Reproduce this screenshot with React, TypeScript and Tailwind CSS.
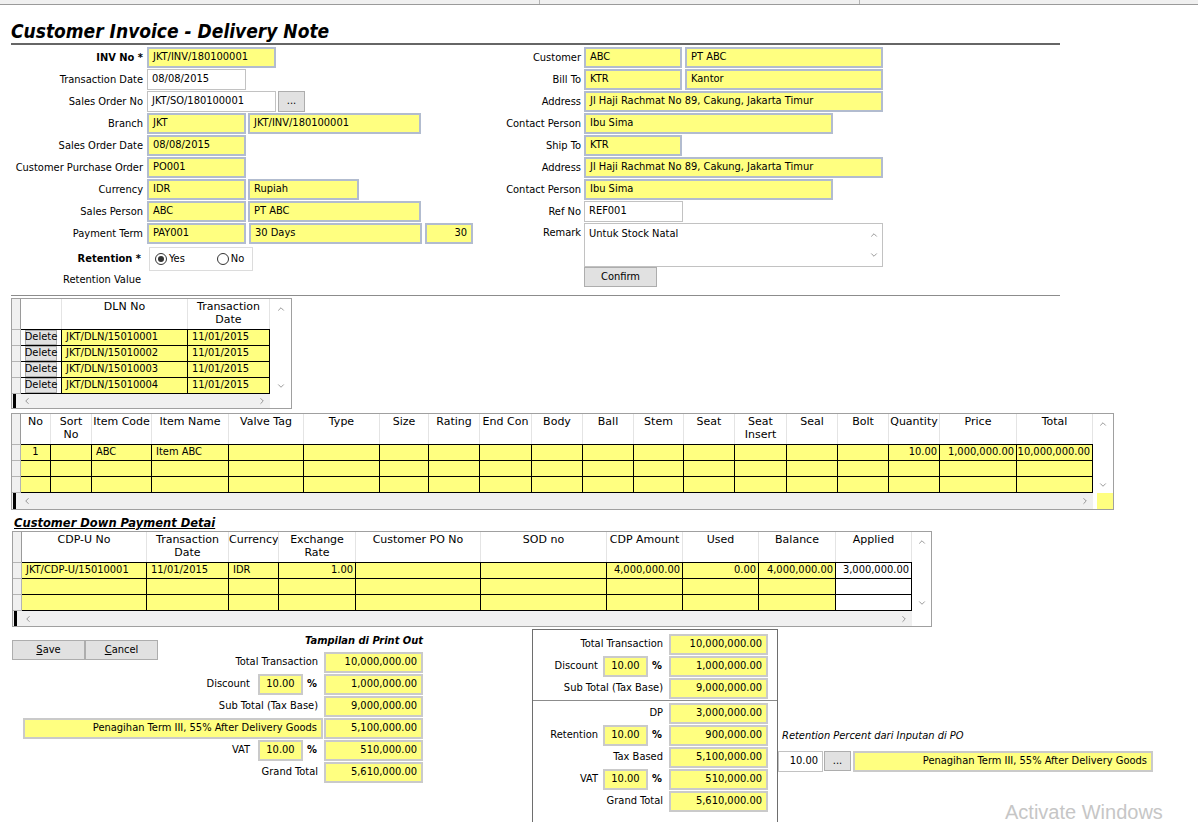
import { ChevronDown, ChevronLeft, ChevronRight, ChevronUp } from "lucide-react";
import type { ReactNode } from "react";

// Tahoma-ish body text and Verdana-ish grid headers
const TH = "font-['DejaVu_Sans_Condensed','Liberation_Sans',sans-serif]";
const VD = "font-['DejaVu_Sans','Verdana',sans-serif]";
const YEL = "bg-[#ffff80]";

const cx = (...a: (string | false | undefined)[]) => a.filter(Boolean).join(" ");

type FieldProps = {
  className?: string;
  value?: string;
  white?: boolean;
  right?: boolean;
  center?: boolean;
  plain?: boolean;
};

function Field({ className, value, white, right, center, plain }: FieldProps) {
  return (
    <div
      className={cx(
        "h-[21px] shrink-0 flex items-center px-[4px] whitespace-nowrap overflow-hidden text-[11px]",
        white ? "bg-white border border-[#c2c2c2]" : YEL,
        !white && (plain ? "border-2 border-[#cacaca]" : "border-2 border-[#b2bccf]"),
        right && "justify-end",
        center && "justify-center",
        className
      )}>
      {value}
    </div>
  );
}

function Btn({ className, children }: { className?: string; children: ReactNode }) {
  return (
    <div
      className={cx(
        "shrink-0 flex items-center justify-center bg-[#e1e1e1] border border-[#adadad] text-[11px]",
        className
      )}>
      {children}
    </div>
  );
}

function LRow({ label, bold, children }: { label: string; bold?: boolean; children: ReactNode }) {
  return (
    <div className="flex h-[22px] items-start">
      <div className={cx("w-[136px] shrink-0 pr-[4px] text-right text-[11px] leading-[21px]", bold && "font-bold")}>
        {label}
      </div>
      <div className="flex">{children}</div>
    </div>
  );
}

function RRow({ label, children }: { label: string; children: ReactNode }) {
  return (
    <div className="flex h-[22px] items-start">
      <div className="w-[104px] shrink-0 pr-[3px] text-right text-[11px] leading-[21px]">{label}</div>
      <div className="flex">{children}</div>
    </div>
  );
}

type Col = {
  w: string;
  h: string;
  a?: "l" | "r" | "c";
  white?: boolean;
  btn?: boolean;
};

function Grid({
  className,
  cols,
  rows,
  vbar,
  corner,
}: {
  className: string;
  cols: Col[];
  rows: string[][];
  vbar: string;
  corner?: ReactNode;
}) {
  return (
    <div className={cx("flex flex-col border border-[#a0a0a0] bg-white overflow-hidden", className)}>
      <div className="flex">
        <div className="flex flex-col flex-1">
          <div className="flex h-[30px]">
            <div className="w-[9px] shrink-0 bg-[#f0f0f0] border-r border-[#9a9a9a]" />
            {cols.map((c, i) => (
              <div
                key={i}
                className={cx(
                  c.w,
                  "shrink-0 border-r border-[#e4e4e4] text-center text-[11px] leading-[13px] pt-[1px] whitespace-pre overflow-hidden",
                  VD
                )}>
                {c.h}
              </div>
            ))}
          </div>
          {rows.map((r, ri) => (
            <div key={ri} className="flex">
              <div
                className={cx(
                  "w-[9px] shrink-0 bg-[#f0f0f0] border-r border-t border-[#b4b4b4]",
                  ri === rows.length - 1 ? "h-[17px] border-b" : "h-[16px]"
                )}
              />
              {cols.map((c, ci) => (
                <div
                  key={ci}
                  className={cx(
                    c.w,
                    "shrink-0 flex items-center px-[4px] border-t border-r border-black text-[11px] whitespace-nowrap overflow-hidden",
                    ri === rows.length - 1 ? "h-[17px] border-b" : "h-[16px]",
                    c.white ? "bg-white" : YEL,
                    c.a === "r" && "justify-end pr-[2px]",
                    c.a === "c" && "justify-center",
                    c.btn && "p-0 bg-white"
                  )}>
                  {c.btn ? (
                    <div className="w-full h-full flex items-center justify-center bg-[#e1e1e1] border border-[#adadad]">
                      Delete
                    </div>
                  ) : (
                    r[ci]
                  )}
                </div>
              ))}
            </div>
          ))}
        </div>
        <div className={cx(vbar, "shrink-0 flex flex-col items-center justify-between pt-[5px] pb-[3px] bg-white")}>
          <ChevronUp size={10} strokeWidth={1.6} color="#666" />
          <ChevronDown size={10} strokeWidth={1.6} color="#666" />
        </div>
      </div>
      <div className="flex flex-1">
        <div className="flex flex-1 items-center bg-[#f0f0f0]">
          <div className="w-[3px] h-full bg-black ml-[1px]" />
          <ChevronLeft size={10} strokeWidth={1.6} color="#666" className="ml-[6px]" />
          <div className="flex-1" />
          <ChevronRight size={10} strokeWidth={1.6} color="#666" className="mr-[3px]" />
        </div>
        <div className={cx(vbar, "shrink-0 flex justify-end bg-white")}>{corner}</div>
      </div>
    </div>
  );
}

function SumRow({
  label,
  pct,
  value,
  pctGap,
}: {
  label: string;
  pct?: string;
  value: string;
  pctGap?: string;
}) {
  return (
    <div className="flex h-[22px] items-start justify-end">
      <div className={cx("text-[11px] leading-[20px] text-right", pct ? pctGap : "pr-[6px]")}>{label}</div>
      {pct && (
        <>
          <Field plain center className="w-[45px] border border-[#b8b8b8]" value={pct} />
          <div className="w-[21px] pl-[4px] text-[11px] font-bold leading-[20px]">%</div>
        </>
      )}
      <Field plain right className="w-[99px]" value={value} />
    </div>
  );
}

const dlnCols: Col[] = [
  { w: "w-[41px]", h: "", btn: true },
  { w: "w-[126px]", h: "DLN No" },
  { w: "w-[82px]", h: "Transaction\nDate" },
];

const itemCols: Col[] = [
  { w: "w-[30px]", h: "No", a: "c" },
  { w: "w-[41px]", h: "Sort\nNo" },
  { w: "w-[60px]", h: "Item Code" },
  { w: "w-[77px]", h: "Item Name" },
  { w: "w-[75px]", h: "Valve Tag" },
  { w: "w-[76px]", h: "Type" },
  { w: "w-[49px]", h: "Size" },
  { w: "w-[51px]", h: "Rating" },
  { w: "w-[52px]", h: "End Con" },
  { w: "w-[51px]", h: "Body" },
  { w: "w-[51px]", h: "Ball" },
  { w: "w-[50px]", h: "Stem" },
  { w: "w-[51px]", h: "Seat" },
  { w: "w-[52px]", h: "Seat\nInsert" },
  { w: "w-[51px]", h: "Seal" },
  { w: "w-[51px]", h: "Bolt" },
  { w: "w-[51px]", h: "Quantity", a: "r" },
  { w: "w-[77px]", h: "Price", a: "r" },
  { w: "w-[76px]", h: "Total", a: "r" },
];

const cdpCols: Col[] = [
  { w: "w-[125px]", h: "CDP-U No" },
  { w: "w-[82px]", h: "Transaction\nDate" },
  { w: "w-[50px]", h: "Currency" },
  { w: "w-[77px]", h: "Exchange\nRate", a: "r" },
  { w: "w-[125px]", h: "Customer PO No" },
  { w: "w-[126px]", h: "SOD no" },
  { w: "w-[76px]", h: "CDP Amount", a: "r" },
  { w: "w-[76px]", h: "Used", a: "r" },
  { w: "w-[77px]", h: "Balance", a: "r" },
  { w: "w-[76px]", h: "Applied", a: "r", white: true },
];

const blank = (n: number) => Array.from({ length: n }, () => "");

export default function App() {
  const dlnRows = [1, 2, 3, 4].map((i) => ["", `JKT/DLN/1501000${i}`, "11/01/2015"]);
  const itemRows = [
    ["1", "", "ABC", "Item ABC", ...blank(12), "10.00", "1,000,000.00", "10,000,000.00"],
    blank(19),
    blank(19),
  ];
  const cdpRows = [
    ["JKT/CDP-U/15010001", "11/01/2015", "IDR", "1.00", "", "", "4,000,000.00", "0.00", "4,000,000.00", "3,000,000.00"],
    blank(10),
    blank(10),
  ];

  return (
    <div className={cx("relative w-[1198px] h-[822px] overflow-hidden bg-white text-black", TH)}>
      {/* window chrome strip */}
      <div className="h-[5px] flex bg-[#f0f0f0] border-b border-[#9a9a9a]">
        <div className="w-[540px] border-r border-[#b4b4b4]" />
        <div className="w-[320px] border-r border-[#b4b4b4]" />
      </div>

      <div className="pl-[11px]">
        <div className="h-[40px] w-[1049px] flex items-end border-b-2 border-[#666]">
          <h1 className="text-[19px] leading-[24px] font-bold italic">Customer Invoice - Delivery Note</h1>
        </div>

        {/* header fields */}
        <div className="flex h-[248px] mt-[2px]">
          <div className="w-[469px] shrink-0 flex flex-col">
            <LRow label="INV No *" bold>
              <Field className="w-[129px]" value="JKT/INV/180100001" />
            </LRow>
            <LRow label="Transaction Date">
              <Field white className="w-[99px]" value="08/08/2015" />
            </LRow>
            <LRow label="Sales Order No">
              <Field white className="w-[129px]" value="JKT/SO/180100001" />
              <Btn className="w-[27px] h-[21px] ml-[2px]">...</Btn>
            </LRow>
            <LRow label="Branch">
              <Field className="w-[99px]" value="JKT" />
              <Field className="w-[173px] ml-[2px]" value="JKT/INV/180100001" />
            </LRow>
            <LRow label="Sales Order Date">
              <Field className="w-[99px]" value="08/08/2015" />
            </LRow>
            <LRow label="Customer Purchase Order">
              <Field className="w-[99px]" value="PO001" />
            </LRow>
            <LRow label="Currency">
              <Field className="w-[99px]" value="IDR" />
              <Field className="w-[111px] ml-[2px]" value="Rupiah" />
            </LRow>
            <LRow label="Sales Person">
              <Field className="w-[99px]" value="ABC" />
              <Field className="w-[173px] ml-[2px]" value="PT ABC" />
            </LRow>
            <LRow label="Payment Term">
              <Field className="w-[99px]" value="PAY001" />
              <Field className="w-[173px] ml-[3px]" value="30 Days" />
              <Field right className="w-[48px] ml-[3px]" value="30" />
            </LRow>
            <div className="flex h-[24px] items-center mt-[2px]">
              <div className="w-[136px] shrink-0 pr-[6px] text-right text-[11px] font-bold">Retention *</div>
              <div className="ml-[2px] w-[104px] h-[24px] flex items-center border border-[#dcdcdc] text-[11px]">
                <span className="ml-[5px] w-[12px] h-[12px] rounded-full border border-[#333] flex items-center justify-center">
                  <span className="w-[6px] h-[6px] rounded-full bg-[#333]" />
                </span>
                <span className="ml-[2px]">Yes</span>
                <span className="ml-[32px] w-[12px] h-[12px] rounded-full border border-[#333]" />
                <span className="ml-[2px]">No</span>
              </div>
            </div>
            <div className="w-[136px] pr-[6px] text-right text-[11px] leading-[17px]">Retention Value</div>
          </div>

          <div className="flex flex-col">
            <RRow label="Customer">
              <Field className="w-[98px]" value="ABC" />
              <Field className="w-[198px] ml-[3px]" value="PT ABC" />
            </RRow>
            <RRow label="Bill To">
              <Field className="w-[98px]" value="KTR" />
              <Field className="w-[198px] ml-[3px]" value="Kantor" />
            </RRow>
            <RRow label="Address">
              <Field className="w-[299px]" value="Jl Haji Rachmat No 89, Cakung, Jakarta Timur" />
            </RRow>
            <RRow label="Contact Person">
              <Field className="w-[249px]" value="Ibu Sima" />
            </RRow>
            <RRow label="Ship To">
              <Field className="w-[98px]" value="KTR" />
            </RRow>
            <RRow label="Address">
              <Field className="w-[299px]" value="Jl Haji Rachmat No 89, Cakung, Jakarta Timur" />
            </RRow>
            <RRow label="Contact Person">
              <Field className="w-[249px]" value="Ibu Sima" />
            </RRow>
            <RRow label="Ref No">
              <Field white className="w-[99px]" value="REF001" />
            </RRow>
            <div className="flex h-[44px] items-start">
              <div className="w-[104px] shrink-0 pr-[3px] text-right text-[11px] leading-[20px]">Remark</div>
              <div className="w-[299px] h-[44px] flex border border-[#c2c2c2] bg-white text-[11px]">
                <div className="flex-1 px-[4px] leading-[20px]">Untuk Stock Natal</div>
                <div className="w-[17px] flex flex-col items-center justify-between py-[6px]">
                  <ChevronUp size={10} strokeWidth={1.6} color="#666" />
                  <ChevronDown size={10} strokeWidth={1.6} color="#666" />
                </div>
              </div>
            </div>
            <div className="pl-[104px]">
              <Btn className="w-[73px] h-[20px]">Confirm</Btn>
            </div>
          </div>
        </div>

        <div className="w-[1049px] border-t border-[#8c8c8c]" />

        <Grid className="mt-[2px] w-[281px] h-[111px]" cols={dlnCols} rows={dlnRows} vbar="w-[21px]" />

        <Grid
          className="mt-[4px] w-[1103px] h-[97px]"
          cols={itemCols}
          rows={itemRows}
          vbar="w-[20px]"
          corner={<div className={cx("w-[16px] h-full", YEL)} />}
        />

        <div className="h-[21px] pl-[3px] flex items-end">
          <div className={cx("whitespace-nowrap text-[11.5px] leading-[15px] font-bold italic underline", VD)}>
            Customer Down Payment Detai
          </div>
        </div>

        <Grid className="ml-[1px] w-[920px] h-[96px]" cols={cdpCols} rows={cdpRows} vbar="w-[19px]" />

        {/* totals */}
        <div className="flex items-start mt-[2px]">
          <div className="ml-[1px] w-[411px] shrink-0 flex flex-col pt-[5px]">
            <div className="flex h-[18px] items-start justify-between">
              <div className="flex mt-[6px]">
                <Btn className="w-[73px] h-[20px]">
                  <span className="underline">S</span>ave
                </Btn>
                <Btn className="w-[73px] h-[20px]">
                  <span className="underline">C</span>ancel
                </Btn>
              </div>
              <div className="text-[11px] font-bold italic leading-[14px]">Tampilan di Print Out</div>
            </div>
            <SumRow label="Total Transaction" value="10,000,000.00" />
            <SumRow label="Discount" pct="10.00" value="1,000,000.00" pctGap="pr-[8px]" />
            <SumRow label="Sub Total (Tax Base)" value="9,000,000.00" />
            <div className="flex h-[22px] items-start justify-end">
              <Field plain right className="w-[300px]" value="Penagihan Term III, 55% After Delivery Goods" />
              <Field plain right className="w-[99px] ml-[1px]" value="5,100,000.00" />
            </div>
            <SumRow label="VAT" pct="10.00" value="510,000.00" pctGap="pr-[8px]" />
            <SumRow label="Grand Total" value="5,610,000.00" />
          </div>

          <div className="ml-[109px] w-[246px] h-[200px] shrink-0 border border-b-0 border-[#6e6e6e] pt-[4px] pr-[9px]">
            <SumRow label="Total Transaction" value="10,000,000.00" />
            <SumRow label="Discount" pct="10.00" value="1,000,000.00" pctGap="pr-[5px]" />
            <SumRow label="Sub Total (Tax Base)" value="9,000,000.00" />
            <div className="-mr-[9px] mb-[2px] border-t border-[#8c8c8c]" />
            <SumRow label="DP" value="3,000,000.00" />
            <SumRow label="Retention" pct="10.00" value="900,000.00" pctGap="pr-[5px]" />
            <SumRow label="Tax Based" value="5,100,000.00" />
            <SumRow label="VAT" pct="10.00" value="510,000.00" pctGap="pr-[5px]" />
            <SumRow label="Grand Total" value="5,610,000.00" />
          </div>

          <div className="flex flex-col pt-[100px]">
            <div className="pl-[4px] text-[11px] italic leading-[14px]">Retention Percent dari Inputan di PO</div>
            <div className="flex mt-[8px]">
              <Field white right className="w-[45px] h-[20px]" value="10.00" />
              <Btn className="w-[27px] h-[20px] ml-[1px]">...</Btn>
              <Field plain right className="w-[300px] h-[20px] ml-[2px]" value="Penagihan Term III, 55% After Delivery Goods" />
            </div>
          </div>
        </div>
      </div>

      <div className="absolute left-[1005px] top-[797px] text-[20px] text-[#c6c6c6] font-['Liberation_Sans',sans-serif]">
        Activate Windows
      </div>
    </div>
  );
}
